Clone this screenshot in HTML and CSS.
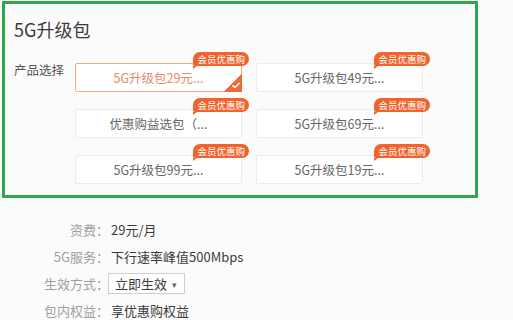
FILE: index.html
```html
<!DOCTYPE html>
<html lang="zh-CN">
<head>
<meta charset="utf-8">
<link rel="stylesheet" href="styles.css">
</head>
<body>
<section class="panel">
  <h2 class="title">5G升级包</h2>
  <div class="pick">
    <div class="pick-label">产品选择</div>
    <div class="grid">
      <div class="card selected"><span class="badge">会员优惠购</span>5G升级包29元...<span class="corner"><svg viewBox="0 0 10 8" width="8" height="7"><path d="M1 4.2 L3.8 6.6 L9 1.2" fill="none" stroke="#fff" stroke-width="1.8" stroke-linecap="round" stroke-linejoin="round"/></svg></span></div>
      <div class="card"><span class="badge">会员优惠购</span>5G升级包49元...</div>
      <div class="card"><span class="badge">会员优惠购</span>优惠购益选包（...</div>
      <div class="card"><span class="badge">会员优惠购</span>5G升级包69元...</div>
      <div class="card"><span class="badge">会员优惠购</span>5G升级包99元...</div>
      <div class="card"><span class="badge">会员优惠购</span>5G升级包19元...</div>
    </div>
  </div>
</section>
<dl class="info">
  <div class="row"><dt>资费：</dt><dd>29元/月</dd></div>
  <div class="row"><dt>5G服务：</dt><dd>下行速率峰值500Mbps</dd></div>
  <div class="row"><dt>生效方式：</dt><dd><span class="select">立即生效 <span class="arrow">▾</span></span></dd></div>
  <div class="row"><dt>包内权益：</dt><dd>享优惠购权益</dd></div>
</dl>
</body>
</html>
```
FILE: styles.css
```css
html, body {
  margin: 0;
  padding: 0;
  background: #fbfbfc;
  font-family: "Noto Sans CJK SC", "Noto Sans", sans-serif;
  overflow: hidden;
}
.panel {
  margin: 1px 0 0 2px;
  width: 476px;
  height: 197px;
  box-sizing: border-box;
  border: 3px solid #2ea84c;
  padding: 13px 0 0 9px;
}
.title {
  margin: 0;
  font-size: 18px;
  line-height: 24px;
  font-weight: normal;
  color: #3a3a3a;
}
.pick {
  display: flex;
  margin-top: 22px;
}
.pick-label {
  width: 61px;
  font-size: 12.5px;
  line-height: 14px;
  color: #555;
}
.grid {
  display: grid;
  grid-template-columns: 167px 167px;
  grid-auto-rows: 29px;
  column-gap: 14px;
  row-gap: 17px;
}
.card {
  position: relative;
  box-sizing: border-box;
  border: 1px solid #ececec;
  border-radius: 2px;
  background: #fff;
  text-align: center;
  font-size: 12.5px;
  line-height: 27px;
  color: #666;
}
.card.selected {
  border-color: #eda98a;
  color: #e6886a;
}
.badge {
  position: absolute;
  top: -12px;
  right: -8px;
  height: 14px;
  padding: 0 4px;
  border-radius: 7px 7px 7px 2px;
  background: #f0642c;
  color: #fff;
  font-size: 9.5px;
  line-height: 14px;
  white-space: nowrap;
}
.badge::after {
  content: "";
  position: absolute;
  left: 0;
  bottom: -3px;
  border-left: 4px solid #f0642c;
  border-bottom: 3px solid transparent;
}
.corner {
  position: absolute;
  right: -1px;
  bottom: -1px;
  width: 18px;
  height: 18px;
  background: linear-gradient(135deg, transparent 50%, #f06a35 50%);
}
.corner svg {
  position: absolute;
  right: 2px;
  bottom: 3px;
}
.info {
  margin: 18px 0 0 0;
  padding: 0;
  font-size: 13px;
  line-height: 27px;
}
.row {
  display: flex;
  align-items: center;
}
.row dt {
  width: 109px;
  text-align: right;
  color: #a0a0a0;
}
.row dd {
  margin: 0 0 0 2px;
  color: #3c3c3c;
}
.select {
  display: inline-block;
  box-sizing: border-box;
  height: 21px;
  line-height: 19px;
  padding: 0 7px 0 6px;
  border: 1px solid #cfcfcf;
  background: #fff;
  margin-left: -3px;
}
.arrow {
  font-size: 9px;
  color: #666;
  vertical-align: 1px;
  margin-left: 2px;
}
```
